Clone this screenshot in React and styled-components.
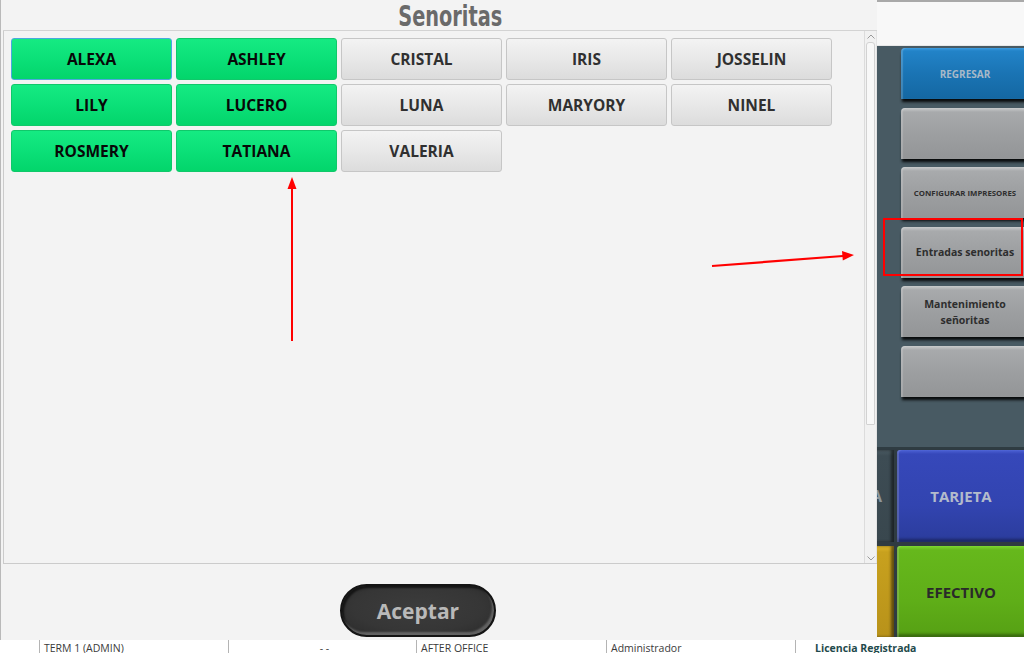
import React from "react";
import styled, { createGlobalStyle } from "styled-components";

const GlobalStyle = createGlobalStyle`
  html, body {
    margin: 0;
    padding: 0;
    width: 1024px;
    height: 653px;
    overflow: hidden;
    background: #ffffff;
    font-family: "Open Sans", "Liberation Sans", sans-serif;
  }
  * { box-sizing: border-box; }
`;

const senoritas = [
  { name: "ALEXA", active: true, focused: true },
  { name: "ASHLEY", active: true },
  { name: "CRISTAL" },
  { name: "IRIS" },
  { name: "JOSSELIN" },
  { name: "LILY", active: true },
  { name: "LUCERO", active: true },
  { name: "LUNA" },
  { name: "MARYORY" },
  { name: "NINEL" },
  { name: "ROSMERY", active: true },
  { name: "TATIANA", active: true },
  { name: "VALERIA" },
];

const menu = [
  { label: "REGRESAR", variant: "blue" },
  { label: "" },
  { label: "CONFIGURAR IMPRESORES", small: true },
  { label: "Entradas senoritas" },
  { label: "Mantenimiento señoritas" },
  { label: "" },
];

const App = () => {
  return (
    <React.Fragment>
      <GlobalStyle />
      <Screen>
        <Main>
          <Dialog>
            <Header>
              <Title>Senoritas</Title>
            </Header>
            <ListFrame>
              <NameGrid>
                {senoritas.map((s) => (
                  <NameButton key={s.name} $active={s.active} $focused={s.focused}>
                    {s.name}
                  </NameButton>
                ))}
              </NameGrid>
              <ScrollBar>
                <ScrollArrow>
                  <svg width="8" height="5" viewBox="0 0 8 5">
                    <path d="M0.5 4.5 L4 1 L7.5 4.5" fill="none" stroke="#9a9a9a" strokeWidth="1" />
                  </svg>
                </ScrollArrow>
                <ScrollTrack>
                  <ScrollThumb />
                </ScrollTrack>
                <ScrollArrow>
                  <svg width="8" height="5" viewBox="0 0 8 5">
                    <path d="M0.5 0.5 L4 4 L7.5 0.5" fill="none" stroke="#9a9a9a" strokeWidth="1" />
                  </svg>
                </ScrollArrow>
              </ScrollBar>
            </ListFrame>
            <Footer>
              <AcceptButton>Aceptar</AcceptButton>
            </Footer>
          </Dialog>

          <SidePanel>
            <TopStrip />
            <Slate>
              {menu.map((m, i) => (
                <PanelButton key={i} $variant={m.variant} $small={m.small}>
                  {m.label}
                </PanelButton>
              ))}
            </Slate>
            <PayRow>
              <Stub $color="slate">
                <StubText>A</StubText>
              </Stub>
              <PayButton $color="blue">TARJETA</PayButton>
            </PayRow>
            <PayRow>
              <Stub $color="gold" />
              <PayButton $color="green">EFECTIVO</PayButton>
            </PayRow>
          </SidePanel>
        </Main>

        <StatusBar>
          <StatusLead />
          <StatusCell $width="189px">TERM 1 (ADMIN)</StatusCell>
          <StatusCell $width="188px" $center>- -</StatusCell>
          <StatusCell $width="190px">AFTER OFFICE</StatusCell>
          <StatusCell $width="189px">Administrador</StatusCell>
          <StatusCell $strong>Licencia Registrada</StatusCell>
        </StatusBar>

        <Annotations width="1024" height="653" viewBox="0 0 1024 653">
          <line x1="292" y1="341" x2="292" y2="186" stroke="#ff0000" strokeWidth="2" />
          <polygon points="292,177 287.5,189 296.5,189" fill="#ff0000" />
          <line x1="712" y1="266" x2="843" y2="256" stroke="#ff0000" strokeWidth="2.2" />
          <polygon points="854,255 842,251 842.8,260.5" fill="#ff0000" />
          <rect x="884" y="219" width="138" height="56" fill="none" stroke="#ff0000" strokeWidth="2" />
        </Annotations>
      </Screen>
    </React.Fragment>
  );
};

const Screen = styled.div`
  position: relative;
  width: 1024px;
  height: 653px;
  display: flex;
  flex-direction: column;
  overflow: hidden;
`;

const Main = styled.div`
  display: flex;
  height: 640px;
`;

const Dialog = styled.div`
  width: 877px;
  height: 640px;
  display: flex;
  flex-direction: column;
  background: #f3f3f3;
  border-left: 1px solid #b9b9b9;
`;

const Header = styled.div`
  height: 31px;
  padding-top: 2px;
  padding-left: 20px;
  border-bottom: 1px solid #d3d3d3;
  text-align: center;
  margin-left: 2px;
`;

const Title = styled.span`
  display: inline-block;
  font-family: "DejaVu Sans Condensed", "DejaVu Sans", sans-serif;
  font-stretch: condensed;
  font-weight: 700;
  font-size: 29px;
  line-height: 29px;
  color: #6a6a6a;
  transform: scaleX(0.74);
  transform-origin: center;
`;

const ListFrame = styled.div`
  height: 533px;
  margin-left: 2px;
  display: flex;
  border-left: 1px solid #cbcbcb;
  border-bottom: 1px solid #cbcbcb;
`;

const NameGrid = styled.div`
  flex: 1;
  display: grid;
  grid-template-columns: repeat(5, 161px);
  grid-auto-rows: 42px;
  column-gap: 4px;
  row-gap: 4px;
  align-content: start;
  padding: 7px 0 0 7px;
`;

const NameButton = styled.div`
  display: flex;
  align-items: center;
  justify-content: center;
  border-radius: 3px;
  font-family: "Open Sans", sans-serif;
  font-weight: 700;
  font-size: 15.5px;
  color: ${(p) => (p.$active ? "#080808" : "#303030")};
  background: ${(p) =>
    p.$active
      ? "linear-gradient(to bottom, #15ea82 0%, #0be078 50%, #03d56b 100%)"
      : "linear-gradient(to bottom, #f3f3f3 0%, #e8e8e8 50%, #dcdcdc 100%)"};
  border: 1px solid
    ${(p) => (p.$focused ? "#4aa8de" : p.$active ? "#10c86a" : "#c6c6c6")};
`;

const ScrollBar = styled.div`
  width: 13px;
  display: flex;
  flex-direction: column;
  align-items: center;
  border-left: 1px solid #dcdcdc;
  border-right: 1px solid #e4e4e4;
  background: #f1f1f1;
`;

const ScrollArrow = styled.div`
  height: 10px;
  display: flex;
  align-items: center;
  justify-content: center;
`;

const ScrollTrack = styled.div`
  flex: 1;
  width: 9px;
  padding-top: 1px;
`;

const ScrollThumb = styled.div`
  height: 383px;
  border: 1px solid #d2d2d2;
  border-radius: 3px 3px 1px 1px;
  background: #f8f8f8;
`;

const Footer = styled.div`
  flex: 1;
  display: flex;
  align-items: flex-end;
  padding-left: 339px;
  padding-bottom: 3px;
`;

const AcceptButton = styled.div`
  width: 156px;
  height: 53px;
  border-radius: 27px;
  display: flex;
  align-items: center;
  justify-content: center;
  font-family: "Open Sans", sans-serif;
  font-weight: 700;
  font-size: 21px;
  color: #b9b9b9;
  background: radial-gradient(ellipse at 50% 45%, #3c3c3c 0%, #363636 60%, #2a2a2a 100%);
  border: 2px solid #141414;
  box-shadow: inset -2px -3px 2px rgba(140, 140, 140, 0.55),
    inset 2px 2px 2px rgba(0, 0, 0, 0.6);
`;

const SidePanel = styled.div`
  width: 147px;
  display: flex;
  flex-direction: column;
  overflow: hidden;
`;

const TopStrip = styled.div`
  height: 46px;
  background: #f8f8f8;
  border-top: 2px solid #a9a9a9;
  border-bottom: 1px solid #e8e8e8;
`;

const Slate = styled.div`
  height: 403px;
  display: flex;
  flex-direction: column;
  gap: 8.5px;
  padding: 2px 0 0 24px;
  background: #485a63;
  border-bottom: 2px solid #2f3c42;
`;

const PanelButton = styled.div`
  width: 128px;
  height: 51px;
  flex-shrink: 0;
  display: flex;
  align-items: center;
  justify-content: center;
  text-align: center;
  padding: 0 8px;
  border-radius: 4px 4px 0 0;
  font-family: "Open Sans", sans-serif;
  font-weight: 700;
  font-size: ${(p) => (p.$small ? "7.8px" : p.$variant ? "10px" : "10.5px")};
  line-height: 16px;
  color: ${(p) => (p.$variant === "blue" ? "#a7b9c8" : "#2e2e2e")};
  background: ${(p) =>
    p.$variant === "blue"
      ? "linear-gradient(to bottom, #3a9be0 0px, #2283c8 3px, #1a74b4 50%, #1467a2 100%)"
      : "linear-gradient(to bottom, #c9cbcc 0px, #a8aaac 4px, #9d9fa1 50%, #939597 100%)"};
  box-shadow: 0 4px 3px -1px rgba(0, 0, 0, 0.9),
    inset 2px 0 1px rgba(255, 255, 255, 0.18);
`;

const PayRow = styled.div`
  height: 96px;
  display: flex;
  gap: 3px;
  padding: 1px 0 3px;
  background: #2f3b41;

  &:last-child {
    height: 92px;
    padding-bottom: 0;
  }
`;

const Stub = styled.div`
  width: 17px;
  flex-shrink: 0;
  overflow: hidden;
  display: flex;
  align-items: center;
  justify-content: flex-end;
  background: ${(p) =>
    p.$color === "gold"
      ? "linear-gradient(to bottom, #e0b62a 0px, #c8a11e 6px, #b8921a 100%)"
      : "linear-gradient(to bottom, #4a5a62 0px, #3d4c54 6px, #39474e 100%)"};
  box-shadow: inset -3px 0 3px rgba(0, 0, 0, 0.5);
`;

const StubText = styled.span`
  margin-right: 12px;
  font-weight: 700;
  font-size: 16px;
  color: #8e979c;
`;

const PayButton = styled.div`
  width: 140px;
  flex-shrink: 0;
  display: flex;
  align-items: center;
  justify-content: center;
  padding-right: 12px;
  border-radius: 3px 0 0 0;
  font-family: "Open Sans", sans-serif;
  font-weight: 700;
  font-size: 15px;
  color: ${(p) => (p.$color === "blue" ? "#b3bbcc" : "#2a2a2a")};
  background: ${(p) =>
    p.$color === "blue"
      ? "linear-gradient(to bottom, #4c62d6 0px, #3648ba 4px, #3244b0 60%, #2b3c9c 100%)"
      : "linear-gradient(to bottom, #7cd72e 0px, #66b81c 4px, #5fae18 60%, #56a014 100%)"};
  box-shadow: inset 2px 0 1px rgba(255, 255, 255, 0.2),
    inset 0 -3px 3px rgba(0, 0, 0, 0.35);
`;

const StatusBar = styled.div`
  height: 13px;
  display: flex;
  background: #ffffff;
  overflow: hidden;
`;

const StatusLead = styled.div`
  width: 39px;
`;

const StatusCell = styled.div`
  width: ${(p) => p.$width || "auto"};
  flex: ${(p) => (p.$width ? "none" : "1")};
  border-left: 1px solid #b4b4b4;
  padding-left: ${(p) => (p.$strong ? "19px" : "4px")};
  text-align: ${(p) => (p.$center ? "center" : "left")};
  font-family: "Open Sans", sans-serif;
  font-size: 10.5px;
  font-weight: ${(p) => (p.$strong ? 700 : 400)};
  line-height: 16px;
  color: ${(p) => (p.$strong ? "#1f4a4c" : "#3a3a3a")};
  white-space: nowrap;
`;

const Annotations = styled.svg`
  position: absolute;
  left: 0;
  top: 0;
  pointer-events: none;
`;

export default App;
